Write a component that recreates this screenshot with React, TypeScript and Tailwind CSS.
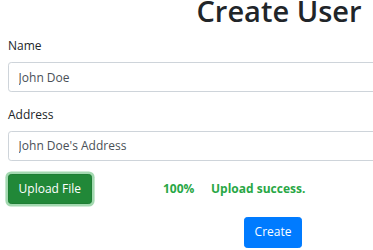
import React from "react";

export default function App() {
  return (
    <div className="w-full overflow-hidden bg-white" style={{ fontFamily: '"Open Sans", "Noto Sans", sans-serif' }}>
      <div className="w-[558px] px-[8px] text-[#212529]">
        <h1 className="-mt-[8px] mb-[6px] text-center text-[29px] font-semibold leading-[38.4px]">Create User</h1>
        <div className="mb-[12.8px]">
          <label className="mb-[6.4px] block text-[12px] leading-[19.2px]">Name</label>
          <input
            readOnly
            value="John Doe"
            className="block h-[30.4px] w-full rounded-[3.2px] border border-[#ced4da] px-[9.6px] text-[12px] text-[#495057] outline-none"
          />
        </div>
        <div className="mb-[12.8px]">
          <label className="mb-[6.4px] block text-[12px] leading-[19.2px]">Address</label>
          <input
            readOnly
            value="John Doe's Address"
            className="block h-[30.4px] w-full rounded-[3.2px] border border-[#ced4da] px-[9.6px] text-[12px] text-[#495057] outline-none"
          />
        </div>
        <div className="flex items-center">
          <div className="w-[155px]">
            <button className="h-[30.4px] rounded-[3.2px] border border-[#1e7e34] bg-[#218838] px-[9.6px] text-[12px] text-white shadow-[0_0_0_2.6px_rgba(72,180,97,0.5)]">
              Upload File
            </button>
          </div>
          <div className="w-[48px] text-[12px] font-bold text-[#28a745]">100%</div>
          <div className="text-[12px] font-bold text-[#28a745]">Upload success.</div>
        </div>
        <div className="mt-[12.8px] pl-[236px]">
          <button className="h-[30.4px] rounded-[3.2px] border border-[#007bff] bg-[#007bff] px-[9.6px] text-[12px] text-white">
            Create
          </button>
        </div>
      </div>
    </div>
  );
}
